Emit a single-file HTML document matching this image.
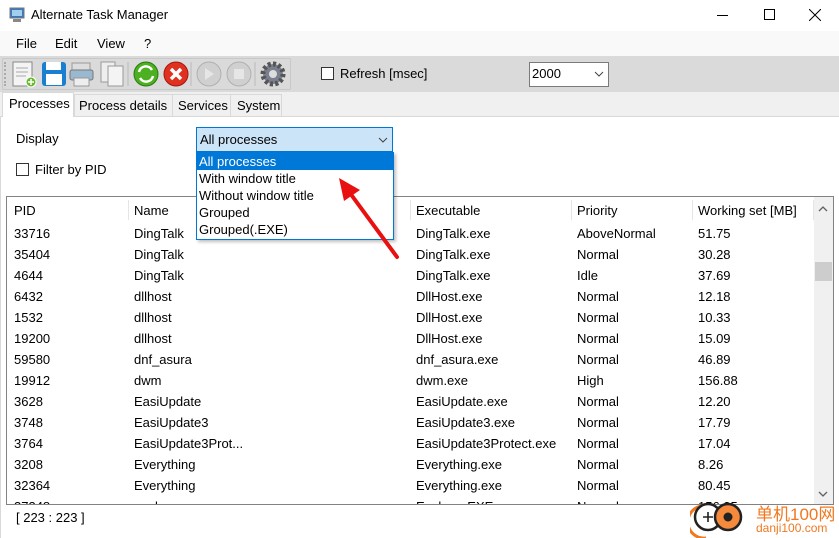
<!DOCTYPE html>
<html><head><meta charset="utf-8"><style>
*{box-sizing:border-box;margin:0;padding:0}
body{width:839px;height:538px;overflow:hidden;background:#f0f0f0;font-family:"Liberation Sans","Noto Sans CJK SC",sans-serif;font-size:13px;color:#000;position:relative}
.a{position:absolute;white-space:nowrap}
.row{position:absolute;left:0;height:21px;line-height:21px}
.row span{position:absolute}
</style></head><body>
<div class="a" style="left:0;top:0;width:839px;height:31px;background:#fff"></div>
<svg class="a" style="left:9px;top:7px" width="16" height="16"><rect x="1" y="1" width="14" height="10" fill="#3a78c0" stroke="#777"/><rect x="3" y="3" width="10" height="6" fill="#9fd0f0"/><rect x="4" y="12" width="8" height="3" fill="#888"/></svg>
<div class="a" style="left:31px;top:7px;font-size:13px">Alternate Task Manager</div>
<div class="a" style="left:717px;top:15px;width:11px;height:1px;background:#000"></div>
<div class="a" style="left:764px;top:9px;width:11px;height:11px;border:1px solid #000"></div>
<svg class="a" style="left:809px;top:9px" width="12" height="12"><path d="M0 0L12 12M12 0L0 12" stroke="#000" stroke-width="1"/></svg>
<div class="a" style="left:0;top:31px;width:839px;height:25px;background:#f9f9f9"></div>
<div class="a" style="left:16px;top:36px">File</div>
<div class="a" style="left:55px;top:36px">Edit</div>
<div class="a" style="left:97px;top:36px">View</div>
<div class="a" style="left:144px;top:36px">?</div>
<div class="a" style="left:0;top:56px;width:839px;height:36px;background:#dadada"></div>
<div class="a" style="left:2px;top:58px;width:289px;height:32px;border:1px solid #c8c8c8;border-radius:2px"></div>
<div class="a" style="left:4px;top:62px;width:2px;height:24px;border-left:2px dotted #aaa"></div>
<svg class="a" style="left:10px;top:60px" width="285" height="28">
<rect x="3" y="2" width="19" height="24" fill="#f4f4f4" stroke="#888"/><path d="M6 8h12M6 12h12M6 16h10" stroke="#aaa"/><circle cx="21" cy="22" r="5" fill="#6ab830" stroke="#fff"/><path d="M18 22h6M21 19v6" stroke="#fff" stroke-width="1.5"/>
<rect x="32" y="2" width="24" height="24" rx="3" fill="#1a7fd0"/><rect x="36" y="2" width="15" height="8" fill="#fff"/><rect x="36" y="14" width="16" height="11" fill="#fff"/>
<rect x="62" y="3" width="18" height="8" fill="#ddd" stroke="#999"/><rect x="60" y="10" width="23" height="10" rx="2" fill="#9ab8d0" stroke="#777"/><rect x="64" y="18" width="15" height="8" fill="#eee" stroke="#999"/>
<rect x="91" y="2" width="14" height="20" fill="#eee" stroke="#999"/><rect x="98" y="6" width="15" height="20" fill="#f4f4f4" stroke="#999"/>
<line x1="118" y1="2" x2="118" y2="26" stroke="#bbb"/>
<circle cx="136" cy="14" r="12" fill="#4cb020" stroke="#2a7a10"/><path d="M129 12a7 7 0 0 1 13-2M143 16a7 7 0 0 1-13 2" stroke="#fff" stroke-width="2.5" fill="none"/>
<circle cx="166" cy="14" r="12" fill="#e03020" stroke="#a01810"/><path d="M161 9l10 10M171 9l-10 10" stroke="#fff" stroke-width="3.5"/>
<line x1="181" y1="2" x2="181" y2="26" stroke="#bbb"/>
<circle cx="199" cy="14" r="12" fill="#d0d0d0" stroke="#b0b0b0"/><path d="M195 8l9 6-9 6z" fill="#e6e6e6"/>
<circle cx="229" cy="14" r="12" fill="#d0d0d0" stroke="#b0b0b0"/><rect x="224" y="9" width="10" height="10" fill="#e6e6e6"/>
<line x1="245" y1="2" x2="245" y2="26" stroke="#bbb"/>
<circle cx="263" cy="14" r="10" fill="#7a8090" stroke="#555" stroke-width="5" stroke-dasharray="3 2.2"/><circle cx="263" cy="14" r="4" fill="#ddd"/>
</svg>
<div class="a" style="left:321px;top:67px;width:13px;height:13px;border:1px solid #333;background:#fff"></div>
<div class="a" style="left:340px;top:66px">Refresh [msec]</div>
<div class="a" style="left:529px;top:62px;width:80px;height:25px;border:1px solid #7a7a7a;background:#fff"></div>
<div class="a" style="left:532px;top:66px">2000</div>
<svg class="a" style="left:594px;top:71px" width="10" height="6"><path d="M1 1l4 4 4-4" stroke="#444" fill="none"/></svg>
<div class="a" style="left:0;top:116px;width:839px;height:422px;background:#fff;border-top:1px solid #d9d9d9;border-left:1px solid #d9d9d9"></div>
<div class="a" style="left:74px;top:94px;width:208px;height:23px;border:1px solid #d9d9d9;background:#f0f0f0"></div>
<div class="a" style="left:172px;top:94px;width:1px;height:22px;background:#d9d9d9"></div>
<div class="a" style="left:230px;top:94px;width:1px;height:22px;background:#d9d9d9"></div>
<div class="a" style="left:2px;top:92px;width:72px;height:25px;background:#fff;border:1px solid #d9d9d9;border-bottom:none"></div>
<div class="a" style="left:9px;top:96px">Processes</div>
<div class="a" style="left:79px;top:98px">Process details</div>
<div class="a" style="left:178px;top:98px">Services</div>
<div class="a" style="left:237px;top:98px">System</div>
<div class="a" style="left:16px;top:131px">Display</div>
<div class="a" style="left:16px;top:163px;width:13px;height:13px;border:1px solid #333;background:#fff"></div>
<div class="a" style="left:35px;top:162px">Filter by PID</div>
<div class="a" style="left:6px;top:196px;width:828px;height:309px;border:1px solid #828282;background:#fff;overflow:hidden">
<div class="row" style="top:1px;width:807px;height:25px;line-height:25px">
<span style="left:7px">PID</span><span style="left:127px">Name</span><span style="left:409px">Executable</span><span style="left:570px">Priority</span><span style="left:691px">Working set [MB]</span>
</div>
<div class="a" style="left:121px;top:3px;width:1px;height:20px;background:#e5e5e5"></div>
<div class="a" style="left:403px;top:3px;width:1px;height:20px;background:#e5e5e5"></div>
<div class="a" style="left:564px;top:3px;width:1px;height:20px;background:#e5e5e5"></div>
<div class="a" style="left:685px;top:3px;width:1px;height:20px;background:#e5e5e5"></div>
<div class="a" style="left:806px;top:3px;width:1px;height:20px;background:#e5e5e5"></div>
<div id="rows"></div>
<div class="a" style="left:807px;top:0;width:19px;height:307px;background:#f0f0f0"></div>
<div class="a" style="left:808px;top:65px;width:17px;height:19px;background:#cdcdcd"></div>
<svg class="a" style="left:811px;top:9px" width="10" height="6"><path d="M1 5l4-4 4 4" stroke="#606060" fill="none" stroke-width="1.3"/></svg>
<svg class="a" style="left:811px;top:294px" width="10" height="6"><path d="M1 1l4 4 4-4" stroke="#606060" fill="none" stroke-width="1.3"/></svg>
</div>
<div class="a" style="left:16px;top:510px">[ 223 : 223 ]</div>
<div class="a" style="left:196px;top:127px;width:197px;height:25px;border:1px solid #0078d7;background:#cce4f7"></div>
<div class="a" style="left:200px;top:132px">All processes</div>
<svg class="a" style="left:378px;top:137px" width="10" height="6"><path d="M1 1l4 4 4-4" stroke="#444" fill="none"/></svg>
<div class="a" style="left:196px;top:152px;width:198px;height:88px;border:1px solid #0078d7;background:#fff;box-shadow:2px 2px 3px rgba(0,0,0,.25)"></div>
<div class="a" style="left:197px;top:153px;width:196px;height:17px;background:#0078d7"></div>
<div class="a" style="left:199px;top:154px;color:#fff">All processes</div>
<div class="a" style="left:199px;top:171px">With window title</div>
<div class="a" style="left:199px;top:188px">Without window title</div>
<div class="a" style="left:199px;top:205px">Grouped</div>
<div class="a" style="left:199px;top:222px">Grouped(.EXE)</div>
<svg class="a" style="left:330px;top:170px" width="80" height="100"><path d="M67 87L17 19" stroke="#e81010" stroke-width="4" stroke-linecap="round"/><path d="M9 8L14 31L30 20Z" fill="#e81010"/></svg>
<svg class="a" style="left:690px;top:500px" width="60" height="38"><path d="M12 6a15 15 0 0 0 4 32" stroke="#f07820" stroke-width="3" fill="none"/><circle cx="18" cy="17" r="13" fill="#fff" stroke="#222" stroke-width="2.5"/><path d="M13 17h10M18 12v10" stroke="#222" stroke-width="1.6"/><circle cx="38" cy="17" r="13" fill="#f58a3c" stroke="#222" stroke-width="2.5"/><circle cx="38" cy="17" r="4.5" fill="#222"/></svg>
<div class="a" style="left:756px;top:500px;font-size:17px;color:#f07820">单机100网</div>
<div class="a" style="left:756px;top:521px;font-size:12px;color:#f07820">danji100.com</div>
<script>
var d=[["33716","DingTalk","DingTalk.exe","AboveNormal","51.75"],["35404","DingTalk","DingTalk.exe","Normal","30.28"],["4644","DingTalk","DingTalk.exe","Idle","37.69"],["6432","dllhost","DllHost.exe","Normal","12.18"],["1532","dllhost","DllHost.exe","Normal","10.33"],["19200","dllhost","DllHost.exe","Normal","15.09"],["59580","dnf_asura","dnf_asura.exe","Normal","46.89"],["19912","dwm","dwm.exe","High","156.88"],["3628","EasiUpdate","EasiUpdate.exe","Normal","12.20"],["3748","EasiUpdate3","EasiUpdate3.exe","Normal","17.79"],["3764","EasiUpdate3Prot...","EasiUpdate3Protect.exe","Normal","17.04"],["3208","Everything","Everything.exe","Normal","8.26"],["32364","Everything","Everything.exe","Normal","80.45"],["37348","explorer","Explorer.EXE","Normal","156.25"]];
var h="";d.forEach(function(r,i){h+='<div class="row" style="top:'+(26+i*21)+'px"><span style="left:7px">'+r[0]+'</span><span style="left:127px">'+r[1]+'</span><span style="left:409px">'+r[2]+'</span><span style="left:570px">'+r[3]+'</span><span style="left:691px">'+r[4]+'</span></div>';});
document.getElementById("rows").innerHTML=h;
</script>
</body></html>
